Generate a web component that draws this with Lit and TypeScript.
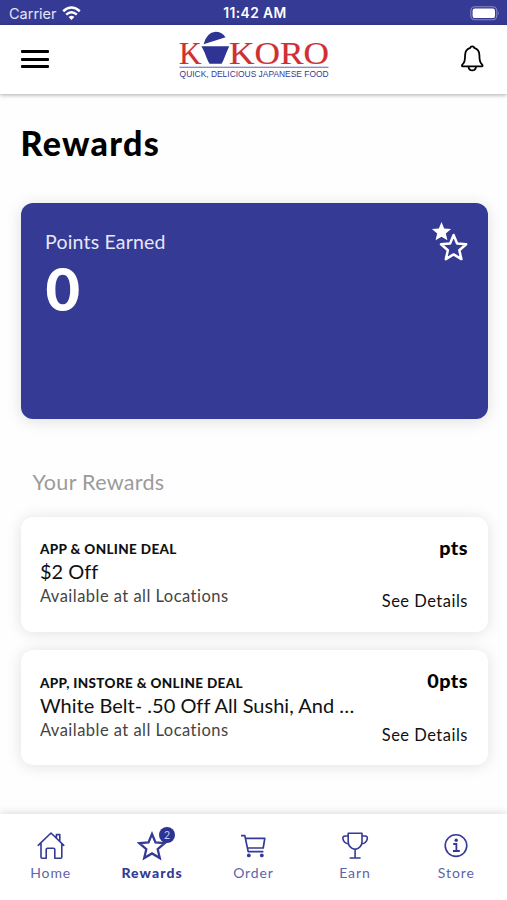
import { LitElement, html, css, svg, nothing, type TemplateResult } from "lit";
import { customElement, property } from "lit/decorators.js";
import { classMap } from "lit/directives/class-map.js";

interface Reward {
  kind: string;
  title: string;
  place: string;
  points: string;
}

interface Tab {
  label: string;
  icon: TemplateResult;
  badge?: string;
  active?: boolean;
}

const STAR = "M0 -12.6 L3.5 -4.2 L12.6 -3.4 L5.7 2.6 L7.8 11.5 L0 6.8 L-7.8 11.5 L-5.7 2.6 L-12.6 -3.4 L-3.5 -4.2 Z";

const homeIcon = svg`
  <path d="M2.2 14.3 L15 2 L27.8 14.3 M5 12 V26 Q5 27.2 6.2 27.2 H10.2 V18.6 Q10.2 17.3 11.5 17.3 H17.5 Q18.8 17.3 18.8 18.6 V27.2 H24.6 Q25.8 27.2 25.8 26 V12.6 M20.4 6.8 V3.6 H23.8 V10"
    fill="none" stroke="currentColor" stroke-width="1.6" stroke-linejoin="round" stroke-linecap="round" />`;

const starIcon = svg`
  <path d=${STAR} transform="translate(15 15.6)" fill="none" stroke="currentColor" stroke-width="2.3" />`;

const cartIcon = svg`
  <path d="M3 4.6 H6.8 L10.2 20.6 H25.4 M7.4 7.4 H26.8 L25.2 17 H9.4" fill="none" stroke="currentColor" stroke-width="1.7" stroke-linejoin="round" />
  <circle cx="10.8" cy="24.4" r="1.9" fill="currentColor" />
  <circle cx="23.8" cy="24.4" r="1.9" fill="currentColor" />`;

const trophyIcon = svg`
  <path d="M8.2 2.2 H22 V10.5 Q22 16.8 15.1 18.4 Q8.2 16.8 8.2 10.5 Z M8.2 5 H5 Q2.6 5 2.9 7.6 Q3.6 12.2 8.8 13 M22 5 H25.2 Q27.6 5 27.3 7.6 Q26.6 12.2 21.4 13 M15.1 18.4 V27 M9.6 27 H20.6"
    fill="none" stroke="currentColor" stroke-width="1.6" stroke-linejoin="round" />`;

const infoIcon = svg`
  <circle cx="15" cy="14.6" r="10.8" fill="none" stroke="currentColor" stroke-width="1.6" />
  <circle cx="15.2" cy="9.2" r="1.7" fill="currentColor" />
  <path d="M12.2 13 H15.4 V19.8 M12 20 H18.8" fill="none" stroke="currentColor" stroke-width="1.8" />`;

const rewards: Reward[] = [
  { kind: "APP & ONLINE DEAL", title: "$2 Off", place: "Available at all Locations", points: "pts" },
  {
    kind: "APP, INSTORE & ONLINE DEAL",
    title: "White Belt- .50 Off All Sushi, And …",
    place: "Available at all Locations",
    points: "0pts",
  },
];

const tabs: Tab[] = [
  { label: "Home", icon: homeIcon },
  { label: "Rewards", icon: starIcon, badge: "2", active: true },
  { label: "Order", icon: cartIcon },
  { label: "Earn", icon: trophyIcon },
  { label: "Store", icon: infoIcon },
];

@customElement("status-bar")
class StatusBar extends LitElement {
  static styles = css`
    :host {
      display: grid;
      grid-template-columns: 1fr auto 1fr;
      align-items: center;
      height: 25px;
      flex: none;
      padding: 2px 7px 0 9px;
      box-sizing: border-box;
      background: #353a94;
      color: #fff;
      font: 400 14.5px/23px Inter, sans-serif;
    }
    .carrier { display: flex; align-items: center; gap: 5px; color: #e4e5f6; }
    .time { font-weight: 600; font-size: 13.8px; letter-spacing: 0.4px; margin-right: -1px; }
    .battery { justify-self: end; display: block; }
    svg { display: block; margin-top: -1px; }
  `;

  render() {
    return html`
      <div class="carrier">
        <span>Carrier</span>
        <svg width="19" height="15" viewBox="0 0 19 15" fill="none" stroke="#fff" stroke-width="2.5">
          <path d="M1.2 5.2 Q9.5 -2.2 17.8 5.2" />
          <path d="M4.2 8.6 Q9.5 4 14.8 8.6" />
          <path d="M9.5 14 L6.6 11 Q9.5 8.7 12.4 11 Z" fill="#fff" stroke="none" />
        </svg>
      </div>
      <div class="time">11:42 AM</div>
      <svg class="battery" width="30" height="15" viewBox="0 0 30 15">
        <rect x="0.8" y="0.8" width="26" height="13" rx="4" fill="none" stroke="#8689c4" stroke-width="1.1" />
        <rect x="2.6" y="2.5" width="22.4" height="9.6" rx="2.2" fill="#fff" />
        <path d="M28.2 5 Q30 7.3 28.2 9.6 Z" fill="#8689c4" />
      </svg>
    `;
  }
}

@customElement("app-header")
class AppHeader extends LitElement {
  static styles = css`
    :host {
      display: grid;
      grid-template-columns: 1fr auto 1fr;
      align-items: start;
      height: 68.5px;
      flex: none;
      padding: 0 22.5px 0 21px;
      box-sizing: border-box;
      background: #fff;
      box-shadow: 0 1px 4px rgba(0, 0, 0, 0.34);
      z-index: 1;
    }
    .menu { display: grid; gap: 4.4px; width: 28px; margin-top: 25px; }
    .bar { height: 3.2px; border-radius: 1px; background: #000; }
    .logo { display: block; margin: 5px 0 0 2px; }
    .bell { display: block; justify-self: end; margin-top: 18.5px; }
    .name { font: 31px "Liberation Serif", serif; fill: #cf3034; stroke: #cf3034; stroke-width: 0.2; }
    .tagline { font: 8.4px "Liberation Sans", sans-serif; fill: #353a94; }
  `;

  render() {
    return html`
      <div class="menu"><div class="bar"></div><div class="bar"></div><div class="bar"></div></div>
      <svg class="logo" width="152" height="50" viewBox="0 0 152 50">
        <text class="name" x="1" y="33.8" textLength="22.5" lengthAdjust="spacingAndGlyphs">K</text>
        <text class="name" x="51" y="33.8" textLength="100" lengthAdjust="spacingAndGlyphs">KORO</text>
        <path d="M25.6 14.2 Q28.5 2.6 37.5 1.8 Q43.6 1.8 47.6 7.2 Z" fill="#2d3494" />
        <path d="M23.4 16.2 H51.2 Q48.4 22.5 46.6 27.2 Q45.4 30.6 43.6 33.8 H31.6 Q29.6 30.6 28.4 27.2 Q26.4 21.4 23.4 16.2 Z" fill="#2d3494" />
        <rect x="1.5" y="36.7" width="149" height="1.1" fill="#6d71b8" />
        <text class="tagline" x="1.6" y="46.8" textLength="149" lengthAdjust="spacingAndGlyphs">QUICK, DELICIOUS JAPANESE FOOD</text>
      </svg>
      <svg class="bell" width="24.5" height="28.3" viewBox="0 0 26 30" fill="none" stroke="#000" stroke-width="1.9" stroke-linejoin="round">
        <path d="M13 2.4 Q14.8 2.4 15.2 4.2 Q20.6 5.8 20.6 12 Q20.6 18.4 22.4 20.6 Q24 22 24 23 Q24 23.8 22.8 23.8 H3.2 Q2 23.8 2 23 Q2 22 3.6 20.6 Q5.4 18.4 5.4 12 Q5.4 5.8 10.8 4.2 Q11.2 2.4 13 2.4 Z" />
        <path d="M9 24.2 Q9.6 28 13 28 Q16.4 28 17 24.2" />
      </svg>
    `;
  }
}

@customElement("points-card")
class PointsCard extends LitElement {
  static styles = css`
    :host {
      display: flex;
      justify-content: space-between;
      align-items: flex-start;
      height: 216px;
      box-sizing: border-box;
      padding: 18.5px 19.5px 0 24.5px;
      border-radius: 12px;
      background: #353a94;
      color: #fff;
      box-shadow: 0 2px 16px rgba(0, 0, 0, 0.13);
    }
    .label { margin-top: 8.5px; font-size: 19.5px; line-height: 24px; letter-spacing: 0.2px; color: #e6e7f8; }
    .value { margin-left: 0.5px; font-size: 59.5px; line-height: 69px; font-weight: 900; }
    svg { display: block; }
  `;

  render() {
    return html`
      <div>
        <div class="label">Points Earned</div>
        <div class="value">0</div>
      </div>
      <svg width="37" height="41" viewBox="0 0 37 41">
        <path d=${STAR} transform="translate(10.5 9.6) scale(0.76)" fill="#fff" />
        <path d=${STAR} transform="translate(22.6 25.6)" fill="#353a94" stroke="#fff" stroke-width="2.5" stroke-linejoin="round" />
      </svg>
    `;
  }
}

@customElement("reward-card")
class RewardCard extends LitElement {
  @property({ attribute: false }) reward!: Reward;

  static styles = css`
    :host {
      display: flex;
      justify-content: space-between;
      height: 115px;
      box-sizing: border-box;
      padding: 19px 20px 18.5px 19.4px;
      border-radius: 12px;
      background: #fff;
      color: #111;
      box-shadow: 0 1px 15px rgba(0, 0, 0, 0.12);
      white-space: nowrap;
    }
    .kind { margin-top: 4.5px; font-size: 13.5px; line-height: 18px; font-weight: 900; letter-spacing: 0.36px; }
    .title { font-size: 20px; line-height: 26px; letter-spacing: 0.02px; }
    .place { margin-top: 1px; font-size: 16.5px; line-height: 23px; color: #444; letter-spacing: 0.47px; }
    .side { display: flex; flex-direction: column; justify-content: space-between; align-items: flex-end; }
    .points { font-size: 19.8px; line-height: 22px; font-weight: 900; color: #000; letter-spacing: 0.5px; margin-right: -0.5px; }
    .details { font-size: 16.5px; line-height: 24px; letter-spacing: 0.5px; margin-right: -0.5px; }
  `;

  render() {
    const r = this.reward;
    return html`
      <div>
        <div class="kind">${r.kind}</div>
        <div class="title">${r.title}</div>
        <div class="place">${r.place}</div>
      </div>
      <div class="side">
        <div class="points">${r.points}</div>
        <div class="details">See Details</div>
      </div>
    `;
  }
}

@customElement("tab-bar")
class TabBar extends LitElement {
  static styles = css`
    :host {
      display: grid;
      grid-template-columns: repeat(5, 1fr);
      height: 86px;
      flex: none;
      background: #fff;
      color: #353a94;
      box-shadow: 0 -1px 8px rgba(0, 0, 0, 0.15);
    }
    .tab { display: flex; flex-direction: column; align-items: center; padding-top: 17px; }
    .icon { position: relative; width: 30px; height: 30px; }
    .icon svg { display: block; }
    .badge {
      position: absolute;
      left: 22px;
      top: -4px;
      width: 16px;
      height: 16px;
      border-radius: 50%;
      background: #2d3391;
      color: #c9cbec;
      font-size: 10.5px;
      line-height: 16px;
      text-align: center;
    }
    .label { margin-top: 2px; font-size: 14px; line-height: 20px; letter-spacing: 0.9px; color: #6064aa; }
    .active .label { font-weight: 900; color: #353a94; letter-spacing: 1.1px; }
  `;

  render() {
    return html`${tabs.map(
      (t) => html`
        <div class=${classMap({ tab: true, active: !!t.active })}>
          <div class="icon">
            <svg width="30" height="30" viewBox="0 0 30 30">${t.icon}</svg>
            ${t.badge ? html`<div class="badge">${t.badge}</div>` : nothing}
          </div>
          <div class="label">${t.label}</div>
        </div>
      `,
    )}`;
  }
}

@customElement("app-root")
class AppRoot extends LitElement {
  static styles = css`
    :host {
      display: flex;
      flex-direction: column;
      height: 900px;
      overflow: hidden;
      background: #fefefe;
      font-family: Lato, "Open Sans", sans-serif;
    }
    .page { flex: 1; min-height: 0; padding: 0 19.5px 0 20.5px; }
    .heading { margin: 29.5px 0 0; font-size: 34px; line-height: 40px; font-weight: 900; color: #000; letter-spacing: 1.3px; }
    points-card { margin-top: 40px; }
    .section { margin: 49px 0 0 12px; font-size: 21.5px; line-height: 28px; font-weight: 400; color: #9b9b9b; letter-spacing: 0.3px; }
    .list { display: grid; gap: 18.5px; margin-top: 20.5px; }
  `;

  render() {
    return html`
      <status-bar></status-bar>
      <app-header></app-header>
      <main class="page">
        <h1 class="heading">Rewards</h1>
        <points-card></points-card>
        <h2 class="section">Your Rewards</h2>
        <div class="list">${rewards.map((r) => html`<reward-card .reward=${r}></reward-card>`)}</div>
      </main>
      <tab-bar></tab-bar>
    `;
  }
}
